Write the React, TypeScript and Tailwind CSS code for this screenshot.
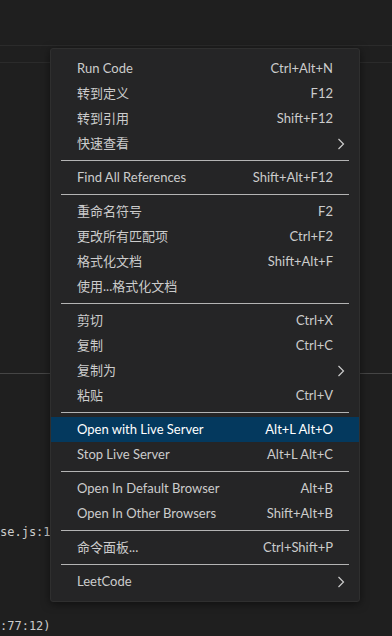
type Item =
  | { sep: true }
  | { label: string; keys?: string; sub?: boolean; active?: boolean };

const items: Item[] = [
  { label: "Run Code", keys: "Ctrl+Alt+N" },
  { label: "转到定义", keys: "F12" },
  { label: "转到引用", keys: "Shift+F12" },
  { label: "快速查看", sub: true },
  { sep: true },
  { label: "Find All References", keys: "Shift+Alt+F12" },
  { sep: true },
  { label: "重命名符号", keys: "F2" },
  { label: "更改所有匹配项", keys: "Ctrl+F2" },
  { label: "格式化文档", keys: "Shift+Alt+F" },
  { label: "使用...格式化文档" },
  { sep: true },
  { label: "剪切", keys: "Ctrl+X" },
  { label: "复制", keys: "Ctrl+C" },
  { label: "复制为", sub: true },
  { label: "粘贴", keys: "Ctrl+V" },
  { sep: true },
  { label: "Open with Live Server", keys: "Alt+L Alt+O", active: true },
  { label: "Stop Live Server", keys: "Alt+L Alt+C" },
  { sep: true },
  { label: "Open In Default Browser", keys: "Alt+B" },
  { label: "Open In Other Browsers", keys: "Shift+Alt+B" },
  { sep: true },
  { label: "命令面板...", keys: "Ctrl+Shift+P" },
  { sep: true },
  { label: "LeetCode", sub: true },
];

const Chevron = () => (
  <svg width="8" height="12" viewBox="0 0 8 12" className="absolute right-[14px] top-1/2 -translate-y-1/2">
    <polyline points="1.5,1 6.5,6 1.5,11" fill="none" stroke="#cccccc" strokeWidth="1.2" />
  </svg>
);

const ContextMenu = () => (
  <div className="absolute left-[50px] top-[48px] w-[310px] bg-[#252526] border border-[#2f2f2f] rounded-[3px] py-[7px] shadow-[0_2px_8px_rgba(0,0,0,0.5)] font-['Lato','Noto_Sans_CJK_SC',sans-serif] text-[13px] text-[#cccccc]">
    {items.map((item, i) =>
      "sep" in item ? (
        <div key={i} className="mx-[10px] mt-[4px] mb-[4px] h-px bg-[#b4b4b4]" />
      ) : (
        <div
          key={i}
          className={`relative flex items-center justify-between h-[25px] pl-[26px] pr-[26px] ${
            item.active ? "bg-[#04395e] text-white" : ""
          }`}
        >
          <span className="leading-none whitespace-nowrap">{item.label}</span>
          {item.keys && <span className="leading-none whitespace-nowrap">{item.keys}</span>}
          {item.sub && <Chevron />}
        </div>
      )
    )}
  </div>
);

export default function App() {
  return (
    <div className="relative w-[392px] h-[636px] overflow-hidden bg-[#1f1f1f]">
      <div className="h-[45px]" />
      <div className="h-px bg-[#2b2b2b]" />
      <div className="h-[16px]" />
      <div className="h-px bg-[#2b2b2b]" />
      <div className="h-[310px]" />
      <div className="h-px bg-[#454545]" />
      <div className="pt-[150px] font-['DejaVu_Sans_Mono','Liberation_Mono',monospace] text-[12px] leading-[16px] text-[#cccccc]">
        <div className="whitespace-nowrap">se.js:1</div>
        <div className="h-[78px]" />
        <div className="whitespace-nowrap">:77:12)</div>
      </div>
      <ContextMenu />
    </div>
  );
}
